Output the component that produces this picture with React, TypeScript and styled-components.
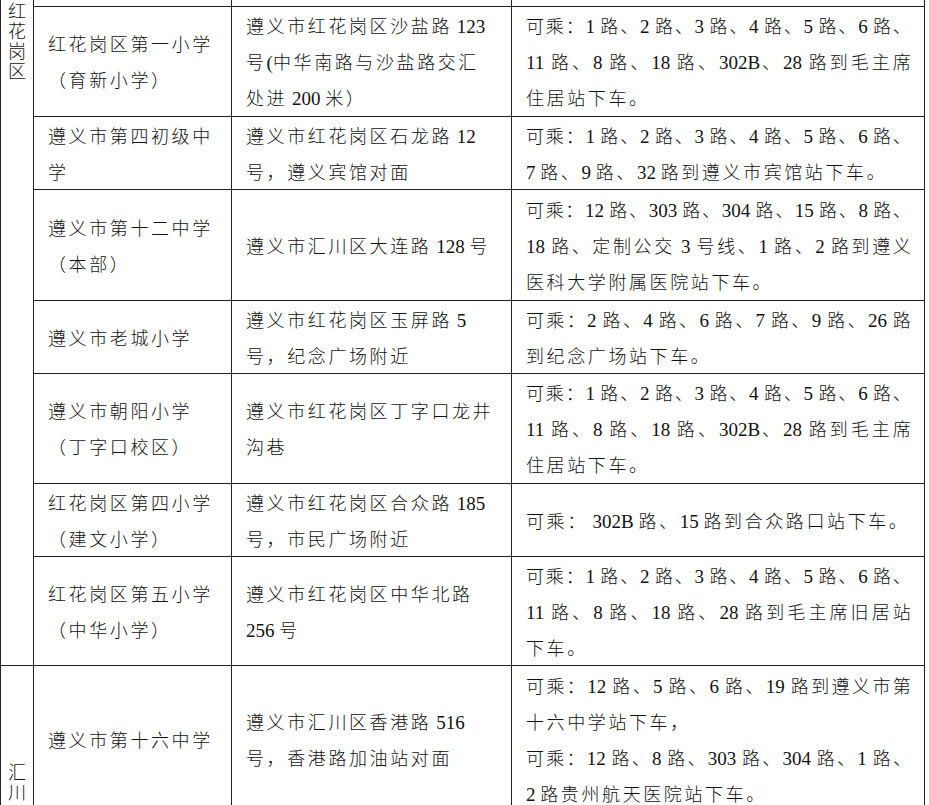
import React from 'react'
import styled, { createGlobalStyle } from 'styled-components'

type School = {
  height: number
  name: string[]
  address: string[]
  bus: string[][]
}

const schools: School[] = [
  {
    height: 110,
    name: ['红花岗区第一小学', '（育新小学）'],
    address: ['遵义市红花岗区沙盐路 123', '号(中华南路与沙盐路交汇', '处进 200 米）'],
    bus: [['可乘：1 路、2 路、3 路、4 路、5 路、6 路、', '11 路、8 路、18 路、302B、28 路到毛主席', '住居站下车。']]
  },
  {
    height: 72,
    name: ['遵义市第四初级中', '学'],
    address: ['遵义市红花岗区石龙路 12', '号，遵义宾馆对面'],
    bus: [['可乘：1 路、2 路、3 路、4 路、5 路、6 路、', '7 路、9 路、32 路到遵义市宾馆站下车。']]
  },
  {
    height: 111,
    name: ['遵义市第十二中学', '（本部）'],
    address: ['遵义市汇川区大连路 128 号'],
    bus: [['可乘：12 路、303 路、304 路、15 路、8 路、', '18 路、定制公交 3 号线、1 路、2 路到遵义', '医科大学附属医院站下车。']]
  },
  {
    height: 73,
    name: ['遵义市老城小学'],
    address: ['遵义市红花岗区玉屏路 5', '号，纪念广场附近'],
    bus: [['可乘：2 路、4 路、6 路、7 路、9 路、26 路', '到纪念广场站下车。']]
  },
  {
    height: 110,
    name: ['遵义市朝阳小学', '（丁字口校区）'],
    address: ['遵义市红花岗区丁字口龙井', '沟巷'],
    bus: [['可乘：1 路、2 路、3 路、4 路、5 路、6 路、', '11 路、8 路、18 路、302B、28 路到毛主席', '住居站下车。']]
  },
  {
    height: 73,
    name: ['红花岗区第四小学', '（建文小学）'],
    address: ['遵义市红花岗区合众路 185', '号，市民广场附近'],
    bus: [['可乘： 302B 路、15 路到合众路口站下车。']]
  },
  {
    height: 109,
    name: ['红花岗区第五小学', '（中华小学）'],
    address: ['遵义市红花岗区中华北路', '256 号'],
    bus: [['可乘：1 路、2 路、3 路、4 路、5 路、6 路、', '11 路、8 路、18 路、28 路到毛主席旧居站', '下车。']]
  }
]

const huichuan: School = {
  height: 148,
  name: ['遵义市第十六中学'],
  address: ['遵义市汇川区香港路 516', '号，香港路加油站对面'],
  bus: [
    ['可乘：12 路、5 路、6 路、19 路到遵义市第', '十六中学站下车，'],
    ['可乘：12 路、8 路、303 路、304 路、1 路、', '2 路贵州航天医院站下车。']
  ]
}

const LATIN = /([\x20-\x7e]+)/

const GlobalStyle = createGlobalStyle`
  html, body {
    margin: 0;
    padding: 0;
    background: #fff;
  }
  body {
    font-family: "Noto Sans CJK SC", sans-serif;
    color: #111;
  }
`

const Page = styled.div`
  width: 929px;
  height: 805px;
  overflow: hidden;
  background: #fff;
`

const Sheet = styled.table`
  width: 924px;
  border-collapse: collapse;
  table-layout: fixed;
`

const Row = styled.tr<{ $h: number }>`
  height: ${(p) => p.$h}px;
`

const Cell = styled.td<{ $open?: boolean }>`
  border: 1px solid #222;
  border-top: ${(p) => (p.$open ? 'none' : '1px solid #222')};
  padding: 0 12px 0 14px;
  vertical-align: middle;
  font-size: ${(p) => (p.$open ? 0 : 18)}px;
  font-weight: 300;
  line-height: ${(p) => (p.$open ? 0 : 36)}px;
  overflow: hidden;
`

const DistrictCell = styled.td<{ $place: 'top' | 'bottom'; $open?: boolean }>`
  border: 1px solid #222;
  border-top: ${(p) => (p.$open ? 'none' : '1px solid #222')};
  padding: ${(p) => (p.$place === 'top' ? '2px 0 0' : '0 0 10px')};
  vertical-align: ${(p) => p.$place};
  text-align: center;
  font-size: 0;
  line-height: 0;
`

const Vertical = styled.span`
  display: inline-block;
  writing-mode: vertical-rl;
  font-size: 18px;
  font-weight: 300;
  line-height: 20px;
  letter-spacing: 2px;
`

const Line = styled.div<{ $justify?: boolean }>`
  height: 36px;
  white-space: ${(p) => (p.$justify ? 'normal' : 'nowrap')};
  letter-spacing: ${(p) => (p.$justify ? '1.2px' : '2.6px')};
  text-align: ${(p) => (p.$justify ? 'justify' : 'left')};
  text-align-last: ${(p) => (p.$justify ? 'justify' : 'auto')};
`

const Latin = styled.span`
  font-family: "Liberation Serif", serif;
  font-size: 19px;
  font-weight: 400;
  line-height: 18px;
  letter-spacing: 0;
`

const Mixed: React.FC<{ text: string }> = ({ text }) => (
  <>
    {text
      .split(LATIN)
      .filter(Boolean)
      .map((part, i) =>
        LATIN.test(part) ? <Latin key={i}>{part}</Latin> : <React.Fragment key={i}>{part}</React.Fragment>
      )}
  </>
)

const Lines: React.FC<{ lines: string[] }> = ({ lines }) => (
  <>
    {lines.map((l, i) => (
      <Line key={i}>
        <Mixed text={l} />
      </Line>
    ))}
  </>
)

const BusInfo: React.FC<{ paragraphs: string[][] }> = ({ paragraphs }) => (
  <>
    {paragraphs.map((para, pi) =>
      para.map((l, i) => (
        <Line key={`${pi}-${i}`} $justify={i < para.length - 1}>
          <Mixed text={l} />
        </Line>
      ))
    )}
  </>
)

const SchoolCells: React.FC<{ school: School }> = ({ school }) => (
  <>
    <Cell>
      <Lines lines={school.name} />
    </Cell>
    <Cell>
      <Lines lines={school.address} />
    </Cell>
    <Cell>
      <BusInfo paragraphs={school.bus} />
    </Cell>
  </>
)

const App: React.FC = () => (
  <Page>
    <GlobalStyle />
    <Sheet>
      <colgroup>
        <col style={{ width: 33 }} />
        <col style={{ width: 198 }} />
        <col style={{ width: 280 }} />
        <col style={{ width: 413 }} />
      </colgroup>
      <tbody>
        <Row $h={6}>
          <DistrictCell $place="top" $open rowSpan={schools.length + 1}>
            <Vertical>红花岗区</Vertical>
          </DistrictCell>
          <Cell $open />
          <Cell $open />
          <Cell $open />
        </Row>
        {schools.map((s) => (
          <Row key={s.name.join('')} $h={s.height}>
            <SchoolCells school={s} />
          </Row>
        ))}
        <Row $h={huichuan.height}>
          <DistrictCell $place="bottom">
            <Vertical>汇川</Vertical>
          </DistrictCell>
          <SchoolCells school={huichuan} />
        </Row>
      </tbody>
    </Sheet>
  </Page>
)

export default App
